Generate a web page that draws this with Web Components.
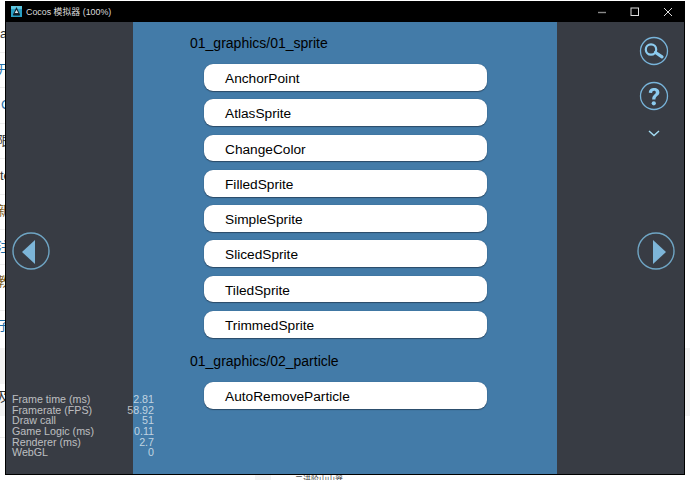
<!DOCTYPE html>
<html>
<head>
<meta charset="utf-8">
<title>Cocos 模拟器</title>
<style>
html, body { margin: 0; padding: 0; width: 690px; height: 480px; overflow: hidden; background: #fff; }
</style>
</head>
<body>
<cc-desktop>
    <cc-window>
        <cc-side-panel slot="left" side="left"></cc-side-panel>
        <cc-scene slot="scene">
            <cc-heading>01_graphics/01_sprite</cc-heading>
            <cc-list-button>AnchorPoint</cc-list-button>
            <cc-list-button>AtlasSprite</cc-list-button>
            <cc-list-button>ChangeColor</cc-list-button>
            <cc-list-button>FilledSprite</cc-list-button>
            <cc-list-button>SimpleSprite</cc-list-button>
            <cc-list-button>SlicedSprite</cc-list-button>
            <cc-list-button>TiledSprite</cc-list-button>
            <cc-list-button>TrimmedSprite</cc-list-button>
            <cc-heading>01_graphics/02_particle</cc-heading>
            <cc-list-button>AutoRemoveParticle</cc-list-button>
        </cc-scene>
        <cc-side-panel slot="right" side="right"></cc-side-panel>
        <cc-stats slot="stats"></cc-stats>
    </cc-window>
</cc-desktop>

<script>
class CcDesktop extends HTMLElement {
    constructor(){
        super();
        this.attachShadow({mode: 'open'});
        this.shadowRoot.innerHTML = `
        <style>
        :host{
            display: block;
            position: relative;
            width: 690px;
            height: 480px;
            overflow: hidden;
            background: #fff;
            font-family: "Liberation Sans", "Noto Sans CJK SC", sans-serif;
        }
        /* what shows of the page behind the simulator */
        .behind span{
            position: absolute;
            left: -3px;
            font-size: 13px;
            line-height: 16px;
            color: #333;
        }
        .behind i{
            position: absolute;
            left: 0;
            width: 5px;
            height: 1px;
            background: #eee;
        }
        .behind .shade{
            position: absolute;
            background: #f3f3f3;
        }
        </style>
        <div class="behind">
            <span style="top:26px;left:0">a</span>
            <i style="top:52px"></i>
            <span style="top:62px;color:#1e6fa8">开</span>
            <i style="top:87px"></i>
            <span style="top:97px;color:#1e6fa8;left:1px">C</span>
            <i style="top:123px"></i>
            <span style="top:133px">限</span>
            <i style="top:158px"></i>
            <span style="top:168px;left:0">te</span>
            <i style="top:194px"></i>
            <span style="top:203px;color:#7a5a20">新</span>
            <i style="top:229px"></i>
            <span style="top:239px;color:#1e6fa8">注</span>
            <i style="top:264px"></i>
            <span style="top:274px;color:#7a5a20">教</span>
            <i style="top:310px"></i>
            <span style="top:318px;color:#1e6fa8">子</span>
            <div class="shade" style="left:0;top:348px;width:5px;height:36px"></div>
            <div class="shade" style="left:0;top:399px;width:5px;height:17px"></div>
            <span style="top:389px">及</span>
            <i style="top:437px"></i>
            <div class="shade" style="left:685px;top:348px;width:5px;height:68px"></div>
            <div class="shade" style="left:255px;top:475px;width:16px;height:5px"></div>
            <span style="top:475px;left:295px;font-size:8px;line-height:10px;color:#444">二进阶山山器</span>
        </div>
        <slot></slot>
        `;
    }
}

class CcWindow extends HTMLElement {
    constructor(){
        super();
        this.attachShadow({mode: 'open'});
        this.shadowRoot.innerHTML = `
        <style>
        :host{
            position: absolute;
            left: 5px;
            top: 1px;
            width: 680px;
            height: 474px;
            box-sizing: border-box;
            border: solid #000;
            border-width: 0 1px 1px 1px;
            background: #000;
            display: grid;
            grid-template-columns: 127px 424px 127px;
            grid-template-rows: 21px 1fr;
        }
        .bar{
            grid-column: 1 / -1;
            display: flex;
            align-items: center;
            color: #dcdcdc;
            font-size: 8.9px;
            padding-left: 5px;
        }
        .bar svg{ display: block; }
        .logo{ margin-right: 4px; }
        .name{ flex: 1; white-space: nowrap; }
        .controls{ display: flex; }
        .controls div{
            width: 32.5px;
            height: 21px;
            display: flex;
            align-items: center;
            justify-content: center;
        }
        </style>
        <div class="bar">
            <svg class="logo" width="11" height="11" viewBox="0 0 15 15">
                <rect width="15" height="15" fill="#2a9fc4"/>
                <rect x="0" y="0" width="15" height="4" fill="#5fc6df"/>
                <path d="M7.5 1.5 L12.5 12 H2.5 Z" fill="#14222e"/>
                <path d="M7.5 5 L10 9.5 H5 Z" fill="#d8e4ea"/>
                <rect x="3" y="11" width="9" height="2" fill="#0c1a24"/>
            </svg>
            <span class="name">Cocos 模拟器 (100%)</span>
            <div class="controls">
                <div><svg width="10" height="10" viewBox="0 0 10 10"><path d="M0 5.5H8" stroke="#8a8a8a" stroke-width="1.4"/></svg></div>
                <div><svg width="10" height="10" viewBox="0 0 10 10"><rect x="1" y="1" width="7.5" height="7.5" fill="none" stroke="#ddd" stroke-width="1"/></svg></div>
                <div><svg width="10" height="10" viewBox="0 0 10 10"><path d="M1 1L9 9M9 1L1 9" stroke="#ddd" stroke-width="1"/></svg></div>
            </div>
        </div>
        <slot name="left"></slot>
        <slot name="scene"></slot>
        <slot name="right"></slot>
        <slot name="stats"></slot>
        `;
    }
}

class CcSidePanel extends HTMLElement {
    constructor(){
        super();
        this.attachShadow({mode: 'open'});
    }
    connectedCallback(){
        const right = this.getAttribute('side') === 'right';
        const ring = '<circle cx="19" cy="19" r="18" fill="none" stroke="#6fa5c4" stroke-width="1.4"/>';
        const arrow = right
            ? `<svg width="38" height="38" viewBox="0 0 38 38">${ring}<path d="M16 8 L29 20 L16 32 Z" fill="#7db5d8"/></svg>`
            : `<svg width="38" height="38" viewBox="0 0 38 38">${ring}<path d="M23 8 L10 20 L23 32 Z" fill="#7db5d8"/></svg>`;
        this.shadowRoot.innerHTML = `
        <style>
        :host{
            display: flex;
            flex-direction: column;
            background: #383c44;
            position: relative;
            box-sizing: border-box;
            padding-left: ${right ? '80px' : '6px'};
        }
        svg{ display: block; }
        .tools{
            display: flex;
            flex-direction: column;
            gap: 15px;
            padding: 13.5px 0 0 2px;
        }
        .arrow{ margin-top: ${right ? '94.5px' : '210px'}; }
        .chev{ margin-left: 8px; margin-top: 3px; }
        </style>
        ${right ? `
        <div class="tools">
            <svg width="30" height="30" viewBox="0 0 30 30">
                <circle cx="15" cy="15" r="13.5" fill="none" stroke="#78b4da" stroke-width="1.3"/>
                <circle cx="12" cy="13.5" r="5.2" fill="none" stroke="#8ccbef" stroke-width="2.2"/>
                <path d="M16.5 16.5 L23 20.8" stroke="#8ccbef" stroke-width="3.2" stroke-linecap="round"/>
            </svg>
            <svg width="30" height="30" viewBox="0 0 30 30">
                <circle cx="15" cy="15" r="13.5" fill="none" stroke="#78b4da" stroke-width="1.3"/>
                <path transform="translate(0 1)" d="M9.8 10.8 C10 7.4 12.4 6 15.2 6 C18.2 6 20.4 7.8 20.4 10.4 C20.4 13.6 16.4 13.8 16.4 17.4 H13.2 C13.2 12.8 16.8 12.6 16.8 10.6 C17 9.4 16.2 8.8 15.1 8.8 C13.9 8.8 13.2 9.6 13.1 11 Z" fill="#8ccbef"/>
                <circle cx="14.8" cy="22.3" r="2.1" fill="#8ccbef"/>
            </svg>
            <svg class="chev" width="14" height="9" viewBox="0 0 14 9">
                <path d="M2 2 L7 6.5 L12 2" fill="none" stroke="#a4def5" stroke-width="1.4"/>
            </svg>
        </div>` : ''}
        <div class="arrow">${arrow}</div>
        `;
    }
}

class CcScene extends HTMLElement {
    constructor(){
        super();
        this.attachShadow({mode: 'open'});
        this.shadowRoot.innerHTML = `
        <style>
        :host{
            display: flex;
            flex-direction: column;
            align-items: flex-start;
            box-sizing: border-box;
            background: #437ba8;
            padding: 13px 0 0 57px;
            color: #000;
        }
        </style>
        <slot></slot>
        `;
    }
}

class CcHeading extends HTMLElement {
    constructor(){
        super();
        this.attachShadow({mode: 'open'});
        this.shadowRoot.innerHTML = `
        <style>
        :host{
            display: block;
            height: 17px;
            line-height: 17px;
            font-size: 14px;
            white-space: nowrap;
            margin-bottom: 12px;
        }
        :host(:not(:first-child)){
            margin-top: 7px;
        }
        </style>
        <slot></slot>
        `;
    }
}

class CcListButton extends HTMLElement {
    constructor(){
        super();
        this.attachShadow({mode: 'open'});
        this.shadowRoot.innerHTML = `
        <style>
        :host{
            display: block;
            box-sizing: border-box;
            width: 283px;
            height: 26.7px;
            margin: 0 0 8.6px 14px;
            padding-left: 21px;
            line-height: 30px;
            font-size: 13.7px;
            background: #fff;
            border-radius: 9px;
            box-shadow: 0 1px 1px rgba(30,50,70,.65), 0 0 1px rgba(40,75,110,.7);
            white-space: nowrap;
        }
        </style>
        <slot></slot>
        `;
    }
}

class CcStats extends HTMLElement {
    constructor(){
        super();
        this.attachShadow({mode: 'open'});
        const rows = [
            ['Frame time (ms)', '2.81'],
            ['Framerate (FPS)', '58.92'],
            ['Draw call', '51'],
            ['Game Logic (ms)', '0.11'],
            ['Renderer (ms)', '2.7'],
            ['WebGL', '0']
        ];
        this.shadowRoot.innerHTML = `
        <style>
        :host{
            position: absolute;
            left: 6px;
            top: 393px;
            width: 142px;
            display: grid;
            grid-template-columns: 1fr auto;
            font-size: 10.7px;
            line-height: 10.67px;
            color: rgba(255,255,255,.68);
        }
        .val{ text-align: right; }
        </style>
        ${rows.map(r => `<div>${r[0]}</div><div class="val">${r[1]}</div>`).join('')}
        `;
    }
}

customElements.define('cc-desktop', CcDesktop);
customElements.define('cc-window', CcWindow);
customElements.define('cc-side-panel', CcSidePanel);
customElements.define('cc-scene', CcScene);
customElements.define('cc-heading', CcHeading);
customElements.define('cc-list-button', CcListButton);
customElements.define('cc-stats', CcStats);
</script>
</body>
</html>
